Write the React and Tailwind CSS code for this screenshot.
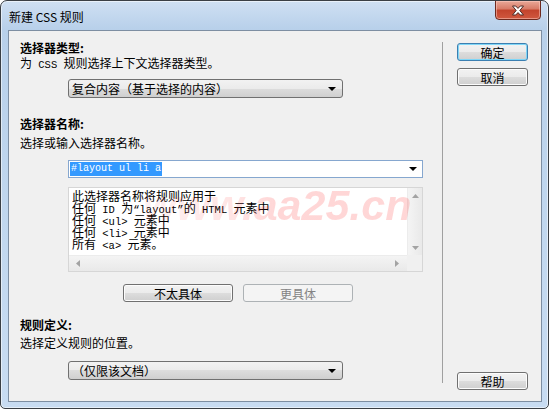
import { useState } from 'react'

const btnFace = 'bg-[linear-gradient(#f2f2f2,#ebebeb_50%,#dddddd_50%,#cfcfcf)]'

function DownArrow() {
    return (
        <svg width="8" height="4" viewBox="0 0 8 4">
            <path d="M0 0h8L4 4z" fill="#000" />
        </svg>
    )
}

function Dropdown({ children }) {
    return (
        <div className={`ml-[48px] w-[275px] h-[19px] rounded-[3px] border border-[#707070] ${btnFace} flex items-center justify-between pl-[3px] pr-[6px]`}>
            <span className="leading-[15px]">{children}</span>
            <DownArrow />
        </div>
    )
}

function Button({ children, kind, className = '' }) {
    if (kind === 'disabled') {
        return (
            <div className={`h-[18px] rounded-[3px] border border-[#adb2b5] bg-[#f4f4f4] text-[#838383] flex items-center justify-center leading-[15px] ${className}`}>
                {children}
            </div>
        )
    }
    const ring = kind === 'default'
        ? 'border-[#3c7fb1] shadow-[inset_0_0_0_1px_#7fd6f7]'
        : 'border-[#707070] shadow-[inset_0_0_0_1px_#fcfcfc]'
    return (
        <div className={`h-[18px] rounded-[3px] border ${ring} ${btnFace} flex items-center justify-center leading-[15px] ${className}`}>
            {children}
        </div>
    )
}

// latin bits, narrow like SimSun; spaces kept inside so they get its width
function M({ children }) {
    return <span className="font-['Liberation_Mono',monospace] text-[10.5px] leading-none whitespace-pre">{children}</span>
}

function ScrollTri({ dir }) {
    const d = {
        up: 'M0 4L3.5 0L7 4z',
        down: 'M0 0h7L3.5 4z',
        left: 'M4 0v7L0 3.5z',
        right: 'M0 0v7L4 3.5z',
    }[dir]
    const vertical = dir === 'up' || dir === 'down'
    return (
        <svg width={vertical ? 7 : 4} height={vertical ? 4 : 7} viewBox={vertical ? '0 0 7 4' : '0 0 4 7'}>
            <path d={d} fill="#a3a3a3" />
        </svg>
    )
}

function InfoBox() {
    return (
        <div className="ml-[48px] mt-[9px] w-[355px] h-[85px] border border-[#d6d6d6] bg-[#f0f0f0] flex flex-col">
            <div className="flex flex-1 min-h-0">
                <div className="flex-1 bg-white pl-[3px] pt-[2px] text-[12px] leading-[12px] text-black">
                    <div className="h-[12px]">此选择器名称将规则应用于</div>
                    <div className="h-[12px]">任何<M> ID </M>为<M>“layout”</M>的<M> HTML </M>元素中</div>
                    <div className="h-[12px]">任何<M> &lt;ul&gt; </M>元素中</div>
                    <div className="h-[12px]">任何<M> &lt;li&gt; </M>元素中</div>
                    <div className="h-[12px]">所有<M> &lt;a&gt; </M>元素。</div>
                </div>
                <div className="w-[15px] bg-[linear-gradient(90deg,#f4f4f4,#e9e9e9)] border-l border-[#ececec] flex flex-col items-center justify-between pt-[6px] pb-[5px]">
                    <ScrollTri dir="up" />
                    <ScrollTri dir="down" />
                </div>
            </div>
            <div className="h-[16px] flex">
                <div className="flex-1 bg-[linear-gradient(#f4f4f4,#e9e9e9)] border-t border-[#ececec] flex items-center justify-between pl-[7px] pr-[8px]">
                    <ScrollTri dir="left" />
                    <ScrollTri dir="right" />
                </div>
                <div className="w-[15px] bg-[#f0f0f0]" />
            </div>
        </div>
    )
}

export default function App() {
    const [selector] = useState('#layout ul li a')

    return (
        <div className="relative w-[549px] h-[409px] rounded-t-[7px] rounded-b-[5px] border border-[#3a3f45] bg-[linear-gradient(#cfe0f3,#b8d0ea_28px,#c2d8ef_60%,#c8dcf2)] shadow-[inset_0_0_0_1px_rgba(255,255,255,0.55)] flex flex-col font-['Noto_Sans_CJK_SC','Noto_Sans',sans-serif] text-[12px] text-black overflow-hidden">
            {/* title bar */}
            <div className="h-[29px] flex items-start justify-between pl-[8px] pr-[7px]">
                <span className="mt-[8px] leading-[15px]">新建 CSS 规则</span>
                <div className="-mt-px w-[46px] h-[20px] rounded-b-[4px] border border-[#6e2a1f] bg-[linear-gradient(#e9a898,#d77a66_45%,#c3432c_50%,#d0583f)] shadow-[inset_0_0_0_1px_rgba(255,210,200,0.5)] flex items-center justify-center">
                    <svg width="14" height="11" viewBox="0 0 14 11">
                        <path d="M1.5 1h3.2L7 3.4 9.3 1h3.2L8.8 5.5l3.7 4.5H9.3L7 7.6 4.7 10H1.5l3.7-4.5z" fill="#fff" stroke="#4d2b26" strokeWidth="1" strokeLinejoin="round" />
                    </svg>
                </div>
            </div>

            {/* client area */}
            <div className="ml-[7px] mr-[6px] h-[372px] border border-[#7d8ea2] bg-[#f0f0f0] flex">
                {/* left panel */}
                <div className="w-[433px] pl-[11px] flex flex-col">
                    <div className="mt-[9px] h-[15px] leading-[15px] font-bold">选择器类型:</div>
                    <div className="h-[15px] leading-[15px]">为<M> CSS </M>规则选择上下文选择器类型。</div>
                    <div className="mt-[9px]">
                        <Dropdown>复合内容（基于选择的内容）</Dropdown>
                    </div>

                    <div className="mt-[18px] h-[15px] leading-[15px] font-bold">选择器名称:</div>
                    <div className="mt-[4px] h-[15px] leading-[15px]">选择或输入选择器名称。</div>
                    <div className="ml-[48px] mt-[10px] w-[355px] h-[18px] border border-[#86a7cf] bg-white flex items-center justify-between pl-[1px] pr-[5px]">
                        <span className="bg-[#3399ff] text-white font-['Liberation_Mono',monospace] text-[10px] leading-[14px] px-px whitespace-pre">{selector}</span>
                        <DownArrow />
                    </div>

                    <InfoBox />

                    <div className="mt-[12px] ml-[103px] flex gap-[10px]">
                        <Button className="w-[110px]">不太具体</Button>
                        <Button kind="disabled" className="w-[110px]">更具体</Button>
                    </div>

                    <div className="mt-[15px] h-[15px] leading-[15px] font-bold">规则定义:</div>
                    <div className="mt-[3px] h-[15px] leading-[15px]">选择定义规则的位置。</div>
                    <div className="mt-[11px]">
                        <Dropdown>（仅限该文档）</Dropdown>
                    </div>
                </div>

                <div className="w-px mt-[11px] mb-[18px] bg-[#a0a0a0]" />

                {/* right buttons */}
                <div className="flex-1 pl-[14px] pt-[12px] pb-[11px] flex flex-col">
                    <Button kind="default" className="w-[71px]">确定</Button>
                    <Button className="w-[71px] mt-[7px]">取消</Button>
                    <Button className="w-[71px] mt-auto">帮助</Button>
                </div>
            </div>

            {/* watermark over the info box */}
            <div className="pointer-events-none absolute left-[142px] top-[183px] text-[43px] leading-[43px] italic font-semibold font-['Liberation_Sans',sans-serif] bg-[linear-gradient(90deg,rgba(255,40,40,0.06),rgba(255,40,40,0.13)_35%,rgba(255,40,40,0.19)_50%)] bg-clip-text text-transparent">
                www.aa25.cn
            </div>
        </div>
    )
}
